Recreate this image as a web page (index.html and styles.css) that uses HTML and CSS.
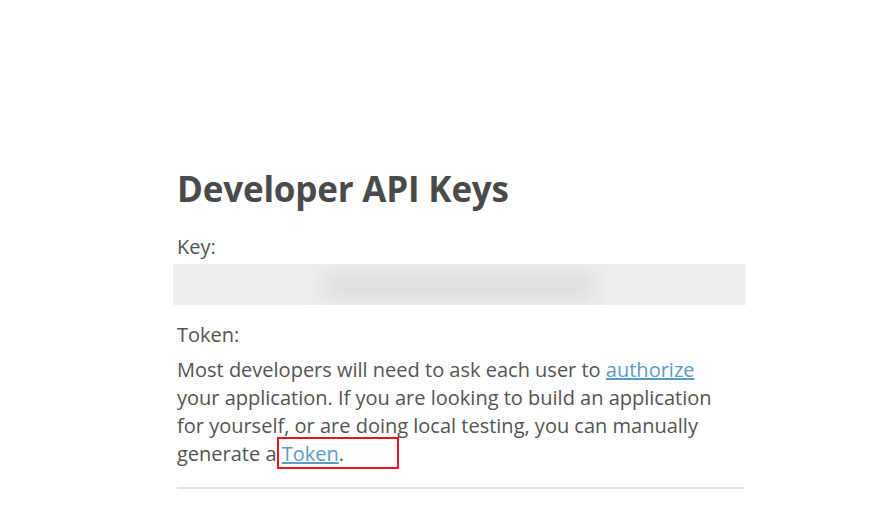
FILE: index.html
```html
<!DOCTYPE html>
<html lang="en">
<head>
<meta charset="utf-8">
<title>Developer API Keys</title>
<link rel="stylesheet" href="styles.css">
</head>
<body>
<main class="page">
  <section class="card">
    <h1 class="title">Developer API Keys</h1>
    <p class="label">Key:</p>
    <div class="key-box"><div class="key-blur"></div></div>
    <p class="label token-label">Token:</p>
    <p class="desc">Most developers will need to ask each user to <a href="#" class="link">authorize</a> your application. If you are looking to build an application for yourself, or are doing local testing, you can manually generate a <span class="mark"><a href="#" class="link">Token</a>.</span></p>
    <hr class="rule">
  </section>
</main>
</body>
</html>
```
FILE: styles.css
```css
html, body {
  margin: 0;
  padding: 0;
  background: #ffffff;
}
body {
  font-family: "Open Sans", "Noto Sans", sans-serif;
  color: #545454;
}
.page {
  padding: 161px 0 0 177px;
}
.card {
  width: 567px;
}
.title {
  margin: 0;
  font-size: 35px;
  line-height: 56px;
  font-weight: 700;
  color: #4a4a4a;
  letter-spacing: -0.2px;
}
.label {
  margin: 16px 0 0;
  font-size: 20px;
  line-height: 28px;
}
.key-box {
  margin: 3px 0 0 -4px;
  width: 573px;
  height: 41px;
  background: #eeeff0;
  position: relative;
  overflow: hidden;
}
.key-blur {
  position: absolute;
  left: 150px;
  right: 150px;
  top: 10px;
  bottom: 8px;
  background: #d6d7d8;
  filter: blur(12px);
}
.token-label {
  margin-top: 16px;
}
.desc {
  margin: 7px 0 0;
  width: 548px;
  font-size: 20px;
  line-height: 28px;
}
.link {
  color: #5b9bc8;
  text-decoration: underline;
}
.mark {
  position: relative;
  display: inline-block;
}
.mark::after {
  content: "";
  position: absolute;
  left: -5px;
  top: -3px;
  width: 122px;
  height: 32px;
  box-sizing: border-box;
  border: 2px solid #e8141b;
}
.rule {
  margin: 19px 0 0;
  border: 0;
  height: 2px;
  background: #e1e1e1;
}
```
